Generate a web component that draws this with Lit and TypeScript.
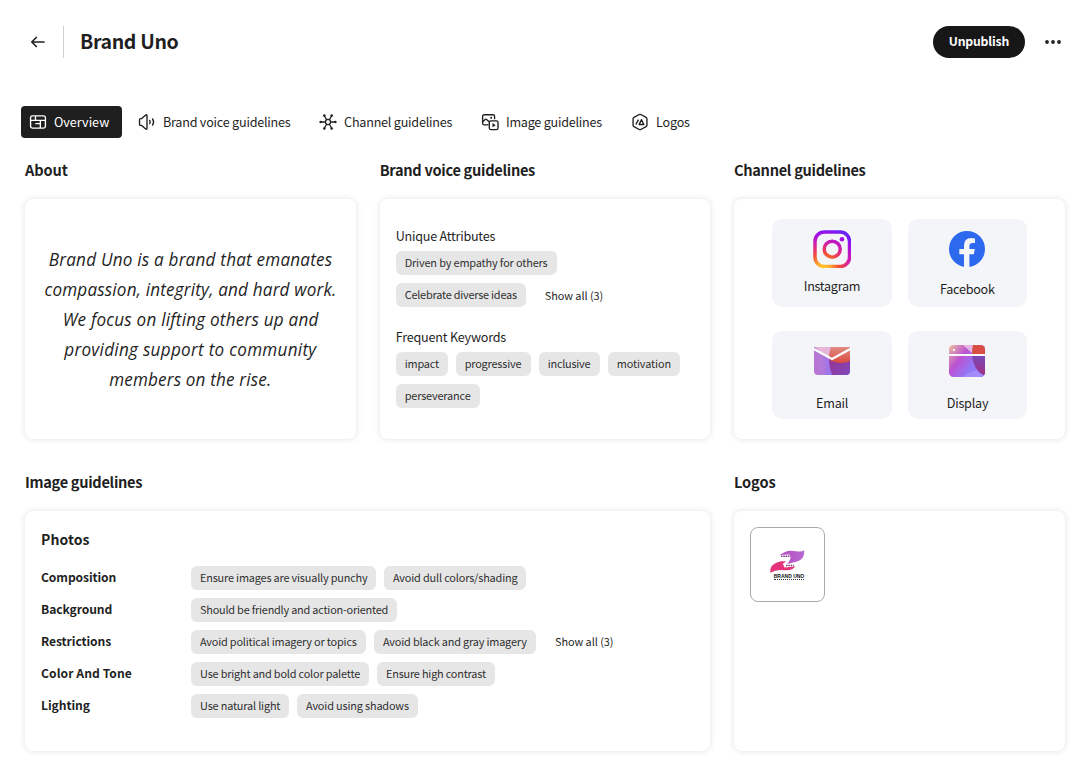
import { LitElement, html, css, svg, nothing } from "lit";
import { customElement, property } from "lit/decorators.js";

const icons: Record<string, unknown> = {
  overview: svg`<g fill="none" stroke="currentColor" stroke-width="1.5"><rect x="1.75" y="3.25" width="16.5" height="13.5" rx="2"/><path d="M2 8.2H18M7.2 3.5V8M7 11.8H12.6M12.6 8.2V16.8"/></g>`,
  voice: svg`<g fill="none" stroke="currentColor" stroke-width="1.5" stroke-linecap="round" stroke-linejoin="round"><path d="M4.2 6.2H2.8Q1.7 6.2 1.7 7.3V12.7Q1.7 13.8 2.8 13.8H4.2L8.5 17.7Q10 18.6 10 17V3Q10 1.4 8.5 2.3Z"/><path d="M13 8.2Q14 10 13 11.8M16.2 6.5Q18.4 10 16.2 13.5"/></g>`,
  channel: svg`<g fill="none" stroke="currentColor" stroke-width="1.4" stroke-linecap="round"><circle cx="10" cy="10" r="2.8"/><path d="M2 10H7M13 10H18M6 3.2L8.5 7.5M14 3.2L11.5 7.5M6 16.8L8.5 12.5M14 16.8L11.5 12.5"/></g><g fill="currentColor"><circle cx="1.8" cy="10" r="1.4"/><circle cx="18.2" cy="10" r="1.4"/><circle cx="5.9" cy="2.9" r="1.4"/><circle cx="14.1" cy="2.9" r="1.4"/><circle cx="5.9" cy="17.1" r="1.4"/><circle cx="14.1" cy="17.1" r="1.4"/></g>`,
  image: svg`<g fill="none" stroke="currentColor" stroke-width="1.5" stroke-linejoin="round"><path d="M8.3 13.2H3.7Q1.8 13.2 1.8 11.3V3.8Q1.8 1.9 3.7 1.9H13.2Q15.1 1.9 15.1 3.8V7"/><path d="M2 9.8L4.6 7.2Q5.4 6.5 6.2 7.2L9 9.8"/><rect x="9.2" y="8.7" width="9.7" height="9.7" rx="1.8"/></g><circle cx="11.3" cy="5.3" r="1.1" fill="currentColor"/><path d="M12.8 11.2V15.8L16.3 13.5Z" fill="currentColor"/>`,
  logos: svg`<g fill="none" stroke="currentColor" stroke-width="1.5" stroke-linejoin="round"><path d="M9 1.7Q10 1.2 11 1.7L16.7 4.8Q17.7 5.4 17.7 6.5V13.5Q17.7 14.6 16.7 15.2L11 18.3Q10 18.8 9 18.3L3.3 15.2Q2.3 14.6 2.3 13.5V6.5Q2.3 5.4 3.3 4.8Z"/><path d="M9 12.8L11.7 7.4L14.2 12.8Z M5.4 12.8L8.3 7.4"/></g>`,
};

const instagram = svg`<svg width="38" height="38" viewBox="0 0 38 38"><defs><radialGradient id="ig" gradientUnits="userSpaceOnUse" cx="10" cy="40" r="42"><stop offset="0" stop-color="#ffd32c"/><stop offset=".15" stop-color="#ffb52d"/><stop offset=".4" stop-color="#f34a37"/><stop offset=".62" stop-color="#d71fa0"/><stop offset=".85" stop-color="#a40ee6"/><stop offset="1" stop-color="#6a22f8"/></radialGradient></defs><g fill="none" stroke="url(#ig)" stroke-width="3.5"><rect x="2" y="2" width="34.5" height="34.5" rx="9.3"/><circle cx="19.2" cy="19.2" r="8"/></g><circle cx="29" cy="9.2" r="2.3" fill="#a60fe4"/></svg>`;
const facebook = svg`<svg width="36" height="36" viewBox="0 0 36 36"><circle cx="18" cy="18" r="18" fill="#2c69ee"/><path d="M15 36V23.2H10.3V18H15V14.6Q15 7 22.2 7Q24.3 7 26 7.4V11.9H23.7Q20.4 11.9 20.4 15V18H25.8L24.9 23.2H20.4V36Z" fill="#f4f5f8"/></svg>`;
const email = svg`<svg width="36" height="28" viewBox="0 0 36 28"><defs><linearGradient id="em"><stop stop-color="#b575d2"/><stop offset=".2" stop-color="#b67ad6"/><stop offset=".5" stop-color="#9273f2"/></linearGradient><linearGradient id="er" x2="0" y2="1"><stop stop-color="#df8b82"/><stop offset="1" stop-color="#dc493e"/></linearGradient><linearGradient id="ep" y2="1"><stop stop-color="#98328f"/><stop offset="1" stop-color="#8049bd"/></linearGradient><clipPath id="ec"><path d="M0 0H36V24Q36 28 32 28H4Q0 28 0 24Z"/></clipPath></defs><g clip-path="url(#ec)"><path fill="url(#em)" d="M0 0H36V28H0Z"/><path fill="#e5b6da" d="M1 0H17L15 12L8 6Z"/><path fill="url(#ep)" d="M15 12H36V28H18Q15 20 15 12Z"/><path fill="url(#er)" d="M17 0H36V14Q27 18 18 14Q15 13 15 10Q15 5 17 0Z"/></g><path d="M-1 1.5L18 12L37 1.5" fill="none" stroke="#fafafc" stroke-width="2.4"/></svg>`;
const display = svg`<svg width="36" height="32" viewBox="0 0 36 32"><defs><linearGradient id="dm" x2="1" y2=".7"><stop stop-color="#edc09c"/><stop offset=".4" stop-color="#bd52d2"/><stop offset=".75" stop-color="#9278f5"/></linearGradient><linearGradient id="dp" x2="0" y2="1"><stop stop-color="#784bbb"/><stop offset="1" stop-color="#a12d80"/></linearGradient><clipPath id="dc"><rect width="36" height="32" rx="4.5"/></clipPath></defs><g clip-path="url(#dc)"><path fill="url(#dm)" d="M0 0H36V32H0Z"/><path fill="#e5b6e3" d="M14 0H24V9Z"/><path fill="#da4d44" d="M24 0H36V9H23Q23 4 24 0Z"/><path fill="url(#dp)" d="M23 10H36V31Q24 25 23 10Z"/><path fill="#a58bfa" d="M14 32Q20 27 27 25Q30 29 35 31V32Z"/></g><path stroke="#f8f7fc" stroke-width="2" d="M0 10H36"/><circle cx="5" cy="5" r="1.2" fill="#fff5ea"/></svg>`;

const hands = svg`<svg class="mark" width="38" height="25" viewBox="0 0 38 25"><defs><linearGradient id="hp"><stop stop-color="#b44fc2"/><stop offset="1" stop-color="#b768d0"/></linearGradient></defs><path fill="url(#hp)" d="M36.2 1.2Q33 3.2 28 2.2Q21 1 17 3L11.5 6L21.5 5.4L22.5 8.6Q22.5 11 20.5 13.2L18.8 14.6Q22 14.6 25 13.4Q32 12.7 35 8.2Q36.5 5.2 36.2 1.2Z"/><path fill="#e5357a" d="M2.5 23.8Q1.7 19 4.5 16.2Q7.5 13 13 12.2L18 12.2Q16.5 13.8 14.8 14.8L16.5 18.6L27.5 17.5L24.5 20Q21 22 13 21Q7 20.8 2.5 23.8Z"/><path d="M13 7.3H21.5M18 16.6H26" stroke="#7d3a78" stroke-width="1.5" stroke-dasharray="1.5 .8"/></svg>`;

@customElement("icon-glyph")
class IconGlyph extends LitElement {
  @property() name = "";
  static styles = css`:host{display:block;width:18px;height:18px}svg{display:block;width:18px;height:18px}`;
  render() { return html`<svg viewBox="0 0 20 20">${icons[this.name]}</svg>`; }
}

/** One line of text whose tracking is adjusted so that it fills a given width. */
@customElement("set-line")
class SetLine extends LitElement {
  @property() text = "";
  @property({ type: Number }) w = 0;
  static styles = css`:host{display:block;white-space:nowrap;text-align:left}span{font-kerning:normal}`;
  render() { return html`<span>${this.text}</span>`; }
  updated() {
    const span = this.renderRoot.querySelector("span")!;
    this.style.width = `${this.w}px`;
    span.style.letterSpacing = "0px";
    // Layout width, unaffected by any transform on an ancestor.
    const natural = span.offsetWidth;
    span.style.letterSpacing = `${(this.w - natural) / this.text.length}px`;
  }
}

type Line = [string, number];
const line = ([text, w]: Line) => html`<set-line text=${text} w=${w}></set-line>`;

const tabs: [string, Line][] = [
  ["overview", ["Overview", 55]], ["voice", ["Brand voice guidelines", 127.3]], ["channel", ["Channel guidelines", 108]],
  ["image", ["Image guidelines", 96.2]], ["logos", ["Logos", 34]],
];
const ABOUT_SCALE = 0.9;
const about: Line[] = [
  ["Brand Uno is a brand that emanates", 283.5], ["compassion, integrity, and hard work.", 292],
  ["We focus on lifting others up and", 255.5], ["providing support to community", 252.5], ["members on the rise.", 162.5],
];
const photoRows: [Line, Line[], boolean][] = [
  [["Composition", 75], [["Ensure images are visually punchy", 167], ["Avoid dull colors/shading", 124]], false],
  [["Background", 71], [["Should be friendly and action-oriented", 188]], false],
  [["Restrictions", 70], [["Avoid political imagery or topics", 157], ["Avoid black and gray imagery", 144]], true],
  [["Color And Tone", 91], [["Use bright and bold color palette", 160], ["Ensure high contrast", 100]], false],
  [["Lighting", 48.5], [["Use natural light", 80], ["Avoid using shadows", 103]], false],
];

@customElement("app-root")
class AppRoot extends LitElement {
  static styles = css`
    :host { display: block; width: 1092px; height: 783px; overflow: hidden; background: #fff; color: #1f1f1f; font-family: "Noto Sans CJK JP", "Noto Sans CJK SC", sans-serif; font-size: 12.6px; }
    * { box-sizing: border-box; }
    header { display: flex; align-items: center; height: 84px; padding: 0 30px 0 29px; }
    .back { display: block; margin-right: 16px; }
    h1 { margin: 0; height: 32px; border-left: 1px solid #cfcfcf; padding-left: 16px; font-size: 19.5px; line-height: 30px; font-weight: 700; }
    .publish { display: flex; justify-content: center; margin-left: auto; width: 92px; height: 32px; border: 0; border-radius: 16px; background: #171717; color: #fff; font: 700 12.2px/30px "Noto Sans CJK JP", sans-serif; padding: 0; }
    .more { margin-left: 19px; display: block; }
    nav { display: flex; margin: 22px 0 0 21px; }
    .tab { display: flex; align-items: center; gap: 7px; height: 32px; padding: 0 13px 0 8px; margin-right: 7.9px; border-radius: 4px; line-height: 32px; white-space: nowrap; }
    .tab.on { background: #1f1f1f; color: #fff; }
    main { display: grid; grid-template-columns: 331px 330.6px 331px; column-gap: 23.7px; margin: 17px 0 0 25px; }
    section { height: 312px; }
    .wide { grid-column: span 2; }
    h2 { margin: 0 0 14px; font-size: 14.6px; line-height: 30px; height: 30px; font-weight: 700; }
    .card { height: 240px; border-radius: 8px; background: #fff; box-shadow: 0 0 6px rgba(0,0,0,.12); }
    .about { padding-top: 45px; font-family: "Open Sans", sans-serif; font-size: 19px; line-height: 30px; font-style: italic; }
    .lines { display: flex; flex-direction: column; align-items: center; transform: scaleX(.9); }
    .voice { padding: 27px 16px; }
    .label { line-height: 20px; height: 20px; margin-bottom: 5px; }
    .chips { display: flex; flex-wrap: wrap; gap: 8px; margin-bottom: 20px; }
    .attributes { width: 240px; }
    .chip { height: 24px; border-radius: 6px; background: #e6e6e6; color: #303030; padding: 0 9px; font-size: 10.9px; line-height: 22px; white-space: nowrap; }
    .all { font-size: 10.9px; line-height: 24px; height: 24px; margin-left: 11px; white-space: nowrap; }
    .row .all { line-height: 22px; }
    .channels { display: grid; grid-template-columns: 120px 119px; gap: 24px 16px; padding: 20px 38px; }
    .channel { display: flex; flex-direction: column; align-items: center; height: 88px; border-radius: 10px; background: #f4f5f8; line-height: 20px; }
    .art { height: 60px; display: flex; align-items: center; }
    .facebook .art, .display .art { margin-right: 1px; }
    .instagram set-line { margin-top: -3px; }
    .email set-line, .display set-line { margin-top: 2px; }
    .photos { padding: 16px 16px; }
    h3 { margin: 0 0 15px; font-size: 14px; line-height: 24px; }
    .row { display: flex; gap: 8px; margin-bottom: 8px; }
    .key { width: 142px; line-height: 22px; height: 24px; font-size: 12.1px; font-weight: 700; }
    .logos { padding: 16px; }
    .logo { width: 75px; height: 75px; border: 1px solid #a9a9a9; border-radius: 8px; display: flex; flex-direction: column; align-items: center; padding-top: 21px; }
    .mark { display: block; }
    .brand { font: 700 5px/6px "Liberation Sans", sans-serif; color: #111; margin: -1px 0 0 3px; border-bottom: 1px dotted #333; }
  `;
  channel(name: string, w: number, art: unknown) {
    return html`<div class="channel ${name.toLowerCase()}"><div class="art">${art}</div>${line([name, w])}</div>`;
  }
  chips(list: Line[], all = false) {
    return html`${list.map((t) => html`<div class="chip">${line(t)}</div>`)}${all ? html`<div class="all">${line(["Show all (3)", 58.5])}</div>` : nothing}`;
  }
  render() {
    return html`
      <header>
        <svg class="back" width="18" height="18" viewBox="0 0 18 18" fill="none" stroke="#222" stroke-width="1.7" stroke-linecap="round" stroke-linejoin="round"><path d="M15 9H3M7.3 4.5L2.8 9L7.3 13.5"/></svg>
        <h1>${line(["Brand Uno", 98])}</h1>
        <button class="publish">${line(["Unpublish", 60.5])}</button>
        <svg class="more" width="18" height="18" viewBox="0 0 18 18" fill="#222"><circle cx="3" cy="9" r="1.9"/><circle cx="9" cy="9" r="1.9"/><circle cx="15" cy="9" r="1.9"/></svg>
      </header>
      <nav>${tabs.map(([i, t], n) => html`<div class="tab ${n ? "" : "on"}"><icon-glyph name=${i}></icon-glyph>${line(t)}</div>`)}</nav>
      <main>
        <section><h2>${line(["About", 42.5])}</h2><div class="card about"><div class="lines">${about.map(([t, w]) => line([t, w / ABOUT_SCALE]))}</div></div></section>
        <section><h2>${line(["Brand voice guidelines", 155.5])}</h2><div class="card voice">
          <div class="label">${line(["Unique Attributes", 99])}</div><div class="chips attributes">${this.chips([["Driven by empathy for others", 143], ["Celebrate diverse ideas", 112]], true)}</div>
          <div class="label">${line(["Frequent Keywords", 110.5])}</div><div class="chips">${this.chips([["impact", 34], ["progressive", 57], ["inclusive", 43], ["motivation", 54], ["perseverance", 66]])}</div>
        </div></section>
        <section><h2>${line(["Channel guidelines", 131.5])}</h2><div class="card channels">
          ${this.channel("Instagram", 56.5, instagram)}${this.channel("Facebook", 55, facebook)}${this.channel("Email", 32, email)}${this.channel("Display", 41.5, display)}
        </div></section>
        <section class="wide"><h2>${line(["Image guidelines", 117])}</h2><div class="card photos"><h3>${line(["Photos", 48.5])}</h3>
          ${photoRows.map(([k, v, all]) => html`<div class="row"><div class="key">${line(k)}</div>${this.chips(v, all)}</div>`)}
        </div></section>
        <section><h2>${line(["Logos", 41.5])}</h2><div class="card logos"><div class="logo">${hands}<div class="brand">BRAND UNO</div></div></div></section>
      </main>`;
  }
}
